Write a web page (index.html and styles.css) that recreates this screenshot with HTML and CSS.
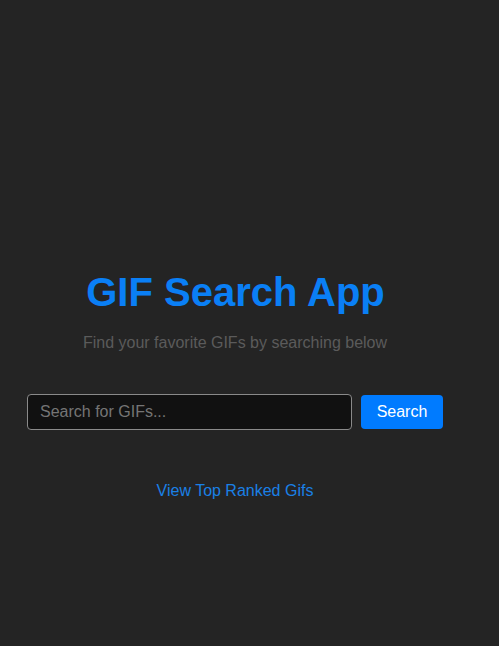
FILE: index.html
```html
<!DOCTYPE html>
<html lang="en">
<head>
<meta charset="utf-8">
<title>GIF Search App</title>
<link rel="stylesheet" href="styles.css">
</head>
<body>
<div class="app">
  <h1 class="title">GIF Search App</h1>
  <p class="subtitle">Find your favorite GIFs by searching below</p>
  <form class="search-row">
    <input class="search-input" type="text" placeholder="Search for GIFs...">
    <button class="search-btn" type="button">Search</button>
  </form>
  <a class="top-link" href="#">View Top Ranked Gifs</a>
</div>
</body>
</html>
```
FILE: styles.css
```css
html, body {
  margin: 0;
  padding: 0;
  background: #242424;
  font-family: "Liberation Sans", Arial, sans-serif;
}
.app {
  width: 470px;
  padding-top: 269px;
  display: flex;
  flex-direction: column;
  align-items: center;
  text-align: center;
}
.title {
  margin: 0 0 0 1px;
  font-size: 40px;
  line-height: 46px;
  font-weight: bold;
  color: #0a7ff5;
}
.subtitle {
  margin: 19px 0 0;
  font-size: 16px;
  line-height: 18px;
  color: #5b5b5b;
}
.search-row {
  margin-top: 42px;
  display: flex;
  align-items: center;
  gap: 9px;
}
.search-input {
  box-sizing: border-box;
  width: 325px;
  height: 36px;
  padding: 0 12px;
  border: 1px solid #8a8a8a;
  border-radius: 4px;
  background: #111111;
  color: #ddd;
  font-family: "Liberation Sans", Arial, sans-serif;
  font-size: 16px;
  outline: none;
}
.search-input::placeholder {
  color: #757575;
}
.search-btn {
  box-sizing: border-box;
  width: 82px;
  height: 34px;
  border: none;
  border-radius: 4px;
  background: #007bff;
  color: #ffffff;
  font-family: "Liberation Sans", Arial, sans-serif;
  font-size: 16px;
  padding: 0;
}
.top-link {
  margin-top: 52px;
  font-size: 16px;
  line-height: 18px;
  color: #1a80e6;
  text-decoration: none;
}
```
